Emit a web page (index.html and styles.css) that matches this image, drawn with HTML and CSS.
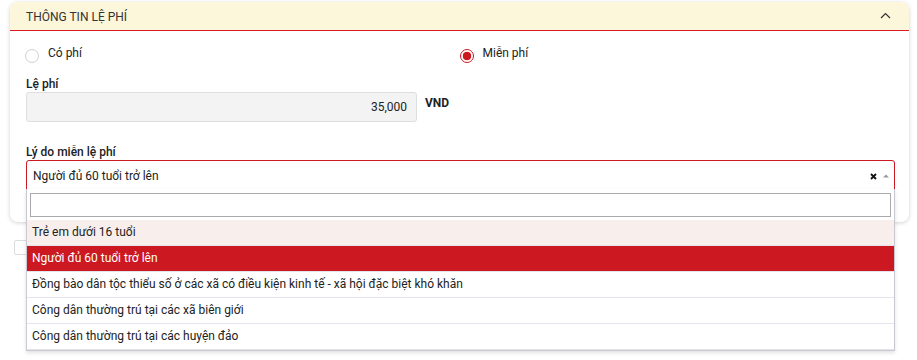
FILE: index.html
```html
<!DOCTYPE html>
<html lang="vi">
<head>
<meta charset="utf-8">
<title>Thông tin lệ phí</title>
<link rel="stylesheet" href="styles.css">
</head>
<body>
<div class="page">
  <section class="card">
    <header class="card-header">
      <span class="card-title">THÔNG TIN LỆ PHÍ</span>
      <svg class="chevron" width="11" height="7" viewBox="0 0 11 7"><path d="M1 6 L5.5 1.5 L10 6" fill="none" stroke="#333" stroke-width="1.2"/></svg>
    </header>
    <div class="card-body">
      <div class="radio-row">
        <label class="radio"><span class="radio-circle"></span><span class="radio-label">Có phí</span></label>
        <label class="radio"><span class="radio-circle checked"></span><span class="radio-label">Miễn phí</span></label>
      </div>
      <div class="field-label">Lệ phí</div>
      <div class="fee-row">
        <div class="fee-input">35,000</div>
        <span class="unit">VND</span>
      </div>
      <div class="field-label reason-label">Lý do miễn lệ phí</div>
      <div class="select-wrap">
        <div class="select">
          <span class="select-value">Người đủ 60 tuổi trở lên</span>
          <span class="select-icons">
            <svg class="clear" width="7" height="7" viewBox="0 0 7 7"><path d="M1 1 L6 6 M6 1 L1 6" stroke="#111" stroke-width="1.8"/></svg>
            <svg class="arrow" width="6" height="4" viewBox="0 0 6 4"><path d="M0 3.5 L3 0.5 L6 3.5 Z" fill="#999"/></svg>
          </span>
        </div>
        <div class="dropdown">
          <div class="search"><div class="search-input"></div></div>
          <ul class="options">
            <li class="opt hover">Trẻ em dưới 16 tuổi</li>
            <li class="opt selected">Người đủ 60 tuổi trở lên</li>
            <li class="opt">Đồng bào dân tộc thiểu số ở các xã có điều kiện kinh tế - xã hội đặc biệt khó khăn</li>
            <li class="opt">Công dân thường trú tại các xã biên giới</li>
            <li class="opt">Công dân thường trú tại các huyện đảo</li>
          </ul>
        </div>
      </div>
    </div>
  </section>
  <div class="below-box"></div>
</div>
</body>
</html>
```
FILE: styles.css
```css
* { box-sizing: border-box; }
html, body { height: 100%; }
body {
  margin: 0;
  background: #fff;
  font-family: Roboto, "Noto Sans", Arial, sans-serif;
  color: #333;
  font-size: 12px;
}
.page {
  padding: 2px 8px 0 10px;
  min-height: 100%;
}
.card {
  width: 899px;
  border-radius: 8px;
  background: #fff;
  box-shadow: 0 1px 4px rgba(0, 0, 0, 0.18);
  position: relative;
  z-index: 1;
}
.card-header {
  height: 29px;
  background: #fcf6da;
  border-bottom: 1px solid #dc1a22;
  border-radius: 8px 8px 0 0;
  display: flex;
  align-items: center;
  justify-content: space-between;
  padding: 0 18px 0 16px;
}
.card-title {
  font-size: 12px;
  color: #333;
  padding-top: 1px;
}
.chevron { margin-top: -1px; }
.card-body {
  padding: 16px 14px 32px 16px;
}
.radio-row {
  display: grid;
  grid-template-columns: 1fr 1fr;
  height: 22px;
}
.radio {
  display: flex;
  align-items: flex-start;
  gap: 9px;
}
.radio-circle {
  width: 14px;
  height: 14px;
  border-radius: 50%;
  border: 1px solid #d0d0d0;
  margin-top: 2px;
  margin-left: -1px;
  flex: none;
}
.radio-circle.checked {
  border: 1.5px solid #cc1820;
  background: radial-gradient(circle, #cc1820 0 4px, #fff 4.6px);
}
.radio-label {
  font-size: 12px;
  line-height: 14px;
  color: #222;
  margin-top: -1px;
}
.field-label {
  margin-top: 7px;
  font-weight: 500;
  font-size: 12px;
  line-height: 16px;
  color: #222;
}
.fee-row {
  display: flex;
  align-items: flex-start;
  gap: 8px;
}
.fee-input {
  width: 391px;
  height: 30px;
  background: #f3f3f3;
  border: 1px solid #dedede;
  border-radius: 3px;
  text-align: right;
  padding: 0 9px;
  line-height: 28px;
  font-size: 12px;
  color: #222;
}
.unit {
  font-weight: 700;
  font-size: 12px;
  line-height: 16px;
  padding-top: 3px;
  color: #222;
}
.reason-label {
  margin-top: 22px;
}
.select-wrap {
  position: relative;
}
.select {
  height: 30px;
  border: 1px solid #cc1820;
  border-radius: 3px 3px 0 0;
  display: flex;
  align-items: center;
  justify-content: space-between;
  padding: 0 5px 0 6px;
}
.select-value {
  font-size: 12px;
  color: #222;
  padding-top: 1px;
}
.select-icons {
  display: flex;
  align-items: center;
  gap: 6px;
  padding-top: 2px;
}
.dropdown {
  position: absolute;
  left: 0;
  right: 0;
  top: 29px;
  background: #fff;
  border: 1px solid #c9c9d1;
  border-top: none;
  box-shadow: 0 2px 4px rgba(0, 0, 0, 0.12);
  z-index: 5;
}
.search {
  padding: 4px 3px 3px 3px;
}
.search-input {
  height: 24px;
  border: 1px solid #aaa;
}
.options {
  list-style: none;
  margin: 0;
  padding: 0;
}
.opt {
  height: 26px;
  line-height: 25px;
  padding: 0 5px;
  border-bottom: 1px solid #e4e4ec;
  font-size: 12px;
  color: #222;
  white-space: nowrap;
}
.opt.hover { background: #f8efec; }
.opt.selected { background: #cc1820; color: #fff; }
.below-box {
  margin: 18px 0 0 4px;
  width: 200px;
  height: 15px;
  border: 1px solid #dcdcdc;
  border-radius: 2px;
}
```
